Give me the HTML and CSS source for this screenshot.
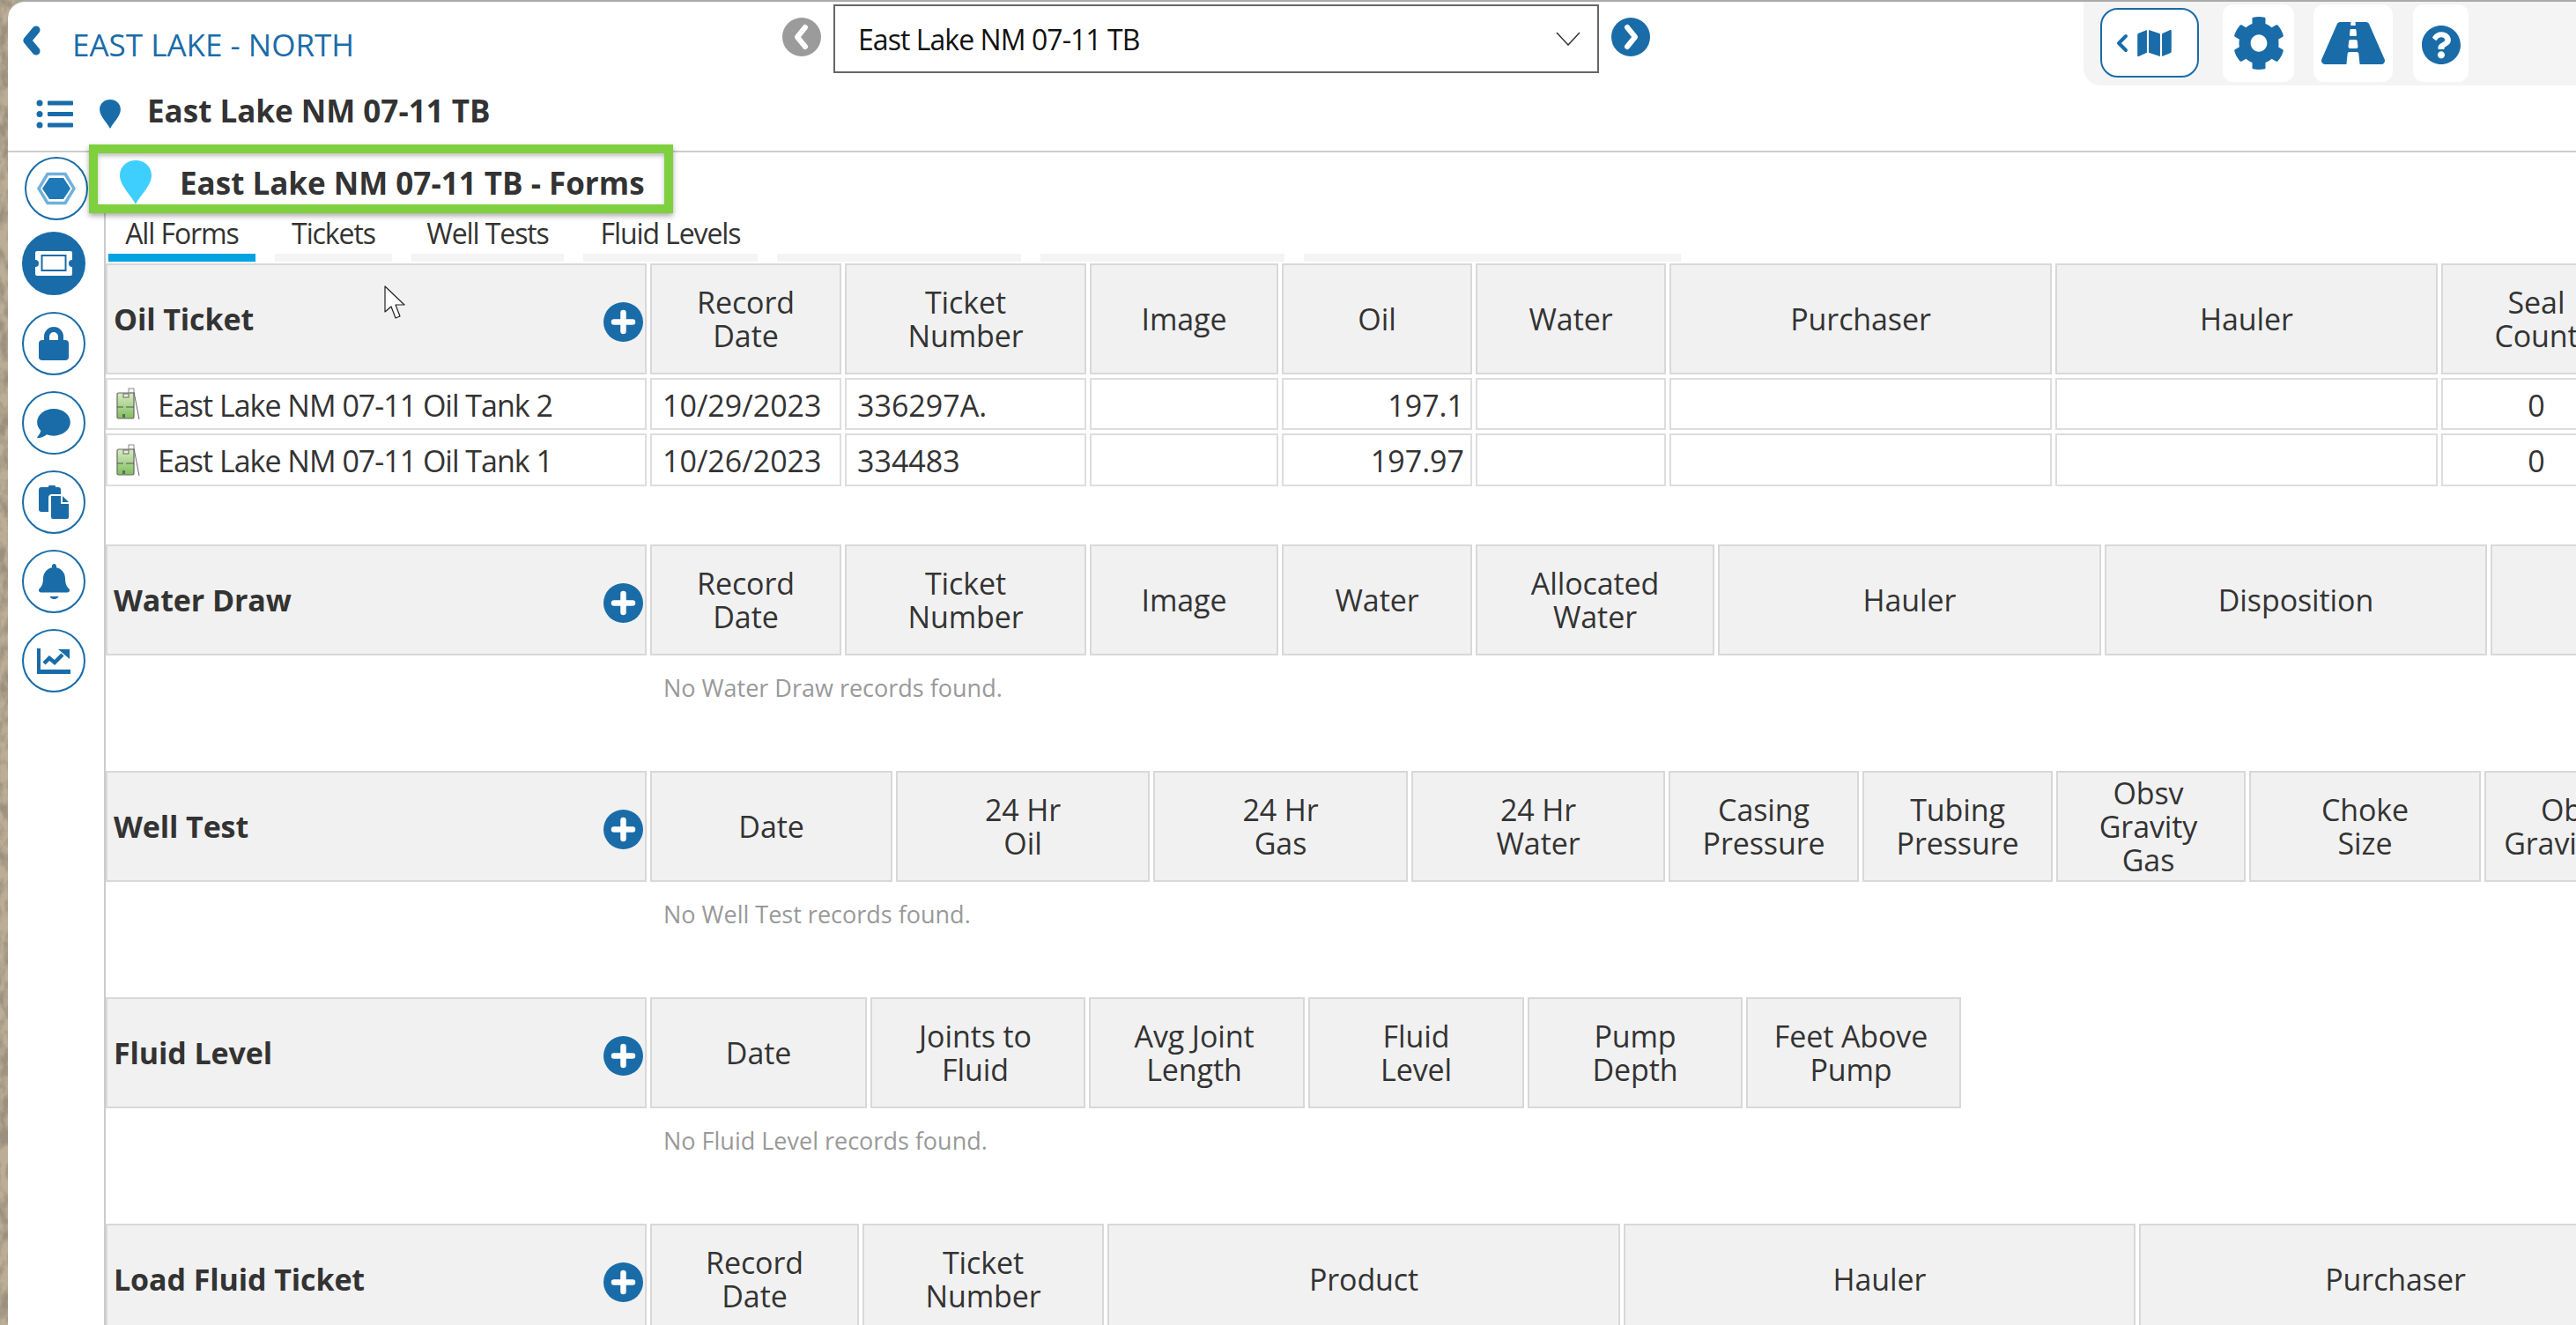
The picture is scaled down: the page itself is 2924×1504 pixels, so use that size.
FILE: index.html

```html
<!DOCTYPE html>
<html lang="en">

<head>
    <meta charset="UTF-8">
    <title>East Lake NM 07-11 TB - Forms</title>
    <link rel="stylesheet" href="styles.css">
</head>

<body>
    <svg class="aerial" aria-hidden="true">
        <filter id="ground" x="0" y="0" width="100%" height="100%">
            <feTurbulence type="fractalNoise" baseFrequency="0.09 0.05" numOctaves="4" seed="7" />
            <feColorMatrix type="matrix" values="0 0 0 0 0.33  0 0 0 0 0.28  0 0 0 0 0.21  3 0 0 0 -1.1" />
        </filter>
        <rect width="100%" height="100%" fill="#bcae96" />
        <rect width="100%" height="100%" filter="url(#ground)" />
    </svg>

    <svg class="defs" aria-hidden="true">
        <symbol id="pin" viewBox="0 0 36 50">
            <path d="M18 50 C14 41 0 29 0 17 C0 7 8 0 18 0 C28 0 36 7 36 17 C36 29 22 41 18 50Z" />
        </symbol>
        <symbol id="plus" viewBox="0 0 45 45">
            <circle cx="22.5" cy="22.5" r="22.5" fill="#196ca8" />
            <path d="M22.5 12v21M12 22.5h21" stroke="#fff" stroke-width="6.5" stroke-linecap="round" />
        </symbol>
        <symbol id="tank" viewBox="0 0 27 37">
            <defs>
                <linearGradient id="tankfill" x1="0" y1="0" x2="0" y2="1">
                    <stop offset="0" stop-color="#d9ebc6" />
                    <stop offset="1" stop-color="#7fbe5c" />
                </linearGradient>
            </defs>
            <rect x="1" y="6" width="19" height="29" rx="1.5" fill="url(#tankfill)" stroke="#666" stroke-width="1.2" />
            <rect x="8" y="7" width="6" height="4" fill="#e8f2dc" stroke="#666" stroke-width="1" />
            <path d="M1 22h7M11 22h9" stroke="#555" stroke-width="1" />
            <rect x="7" y="30" width="3" height="4" fill="#666" />
            <rect x="14" y="1" width="6" height="5" fill="none" stroke="#888" stroke-width="1" />
            <path d="M20 5l6 31" stroke="#666" stroke-width="1" fill="none" />
        </symbol>
    </svg>

    <div class="app">
        <header class="top">
            <div class="topbar">
                <a class="back">
                    <svg class="back-icon" viewBox="0 0 22 34"><path d="M16 5 L6 17 L16 29" /></svg>
                    <span>EAST LAKE - NORTH</span>
                </a>
                <div class="picker">
                    <span class="round-btn round-off"><svg viewBox="0 0 44 44"><path d="M26 11 L17 22 L26 33" /></svg></span>
                    <div class="select">
                        <span>East Lake NM 07-11 TB</span>
                        <svg class="caret" viewBox="0 0 28 16"><path d="M1 1 L14 15 L27 1" /></svg>
                    </div>
                    <span class="round-btn"><svg viewBox="0 0 44 44"><path d="M18 11 L27 22 L18 33" /></svg></span>
                </div>
                <div class="tools">
                    <span class="map-btn">
                        <svg class="map-back" viewBox="0 0 14 22"><path d="M11 3 L3 11 L11 19" /></svg>
                        <svg class="map-icon" viewBox="0 32 576 448"><path d="M0 117.66v346.32c0 11.32 11.43 19.06 21.94 14.86L160 416V32L20.12 87.95A32.006 32.006 0 0 0 0 117.66zM192 416l192 64V96L192 32v384zM554.06 33.16L416 96v384l139.88-55.95A31.996 31.996 0 0 0 576 394.34V48.02c0-11.32-11.43-19.06-21.94-14.86z" /></svg>
                    </span>
                    <span class="tile tile-gear">
                        <svg class="gear" viewBox="0 0 512 512" preserveAspectRatio="none"><path d="M487.4 315.7l-42.6-24.6c4.3-23.2 4.3-47 0-70.2l42.6-24.6c4.9-2.8 7.1-8.6 5.5-14-11.1-35.6-30-67.8-54.7-94.6-3.8-4.1-10-5.1-14.8-2.3L380.8 110c-17.9-15.4-38.5-27.3-60.8-35.1V25.8c0-5.6-3.9-10.5-9.4-11.7-36.7-8.2-74.3-7.8-109.2 0-5.5 1.2-9.4 6.1-9.4 11.7V75c-22.2 7.9-42.8 19.8-60.8 35.1L88.7 85.5c-4.9-2.8-11-1.9-14.8 2.3-24.7 26.7-43.6 58.9-54.7 94.6-1.7 5.4.6 11.2 5.5 14L67.3 221c-4.3 23.2-4.3 47 0 70.2l-42.6 24.6c-4.9 2.8-7.1 8.6-5.5 14 11.1 35.6 30 67.8 54.7 94.6 3.8 4.1 10 5.1 14.8 2.3l42.6-24.6c17.9 15.4 38.5 27.3 60.8 35.1v49.2c0 5.6 3.9 10.5 9.4 11.7 36.7 8.2 74.3 7.8 109.2 0 5.5-1.2 9.4-6.1 9.4-11.7v-49.2c22.2-7.9 42.8-19.8 60.8-35.1l42.6 24.6c4.9 2.8 11 1.9 14.8-2.3 24.7-26.7 43.6-58.9 54.7-94.6 1.5-5.5-.7-11.3-5.6-14.1zM256 336c-44.1 0-80-35.9-80-80s35.9-80 80-80 80 35.9 80 80-35.9 80-80 80z" /></svg>
                    </span>
                    <span class="tile tile-road">
                        <svg class="road" viewBox="0 64 576 384" preserveAspectRatio="none"><path d="M573.19 402.67l-139.79-320C428.43 71.29 417.6 64 405.68 64h-97.59l2.45 23.16c.5 4.72-3.21 8.84-7.96 8.84h-29.16c-4.75 0-8.46-4.12-7.96-8.84L267.91 64h-97.59c-11.93 0-22.76 7.29-27.73 18.67L2.8 402.67C-6.45 423.86 8.31 448 30.54 448h196.84l10.31-97.68c.86-8.14 7.72-14.32 15.91-14.32h68.8c8.19 0 15.05 6.18 15.91 14.32L348.62 448h196.84c22.23 0 36.99-24.14 27.73-45.33zM260.4 135.16a8 8 0 0 1 7.96-7.16h39.29c4.09 0 7.53 3.09 7.96 7.16l4.6 43.58c.75 7.09-4.81 13.26-11.93 13.26h-40.54c-7.13 0-12.68-6.17-11.93-13.26l4.59-43.58zM315.64 304h-55.29c-9.5 0-16.91-8.23-15.91-17.68l5.07-48c.86-8.14 7.72-14.32 15.91-14.32h45.15c8.19 0 15.05 6.18 15.91 14.32l5.07 48c1 9.45-6.41 17.68-15.91 17.68z" /></svg>
                    </span>
                    <span class="tile tile-help">
                        <svg class="help" viewBox="8 8 496 496" preserveAspectRatio="none"><path d="M504 256c0 136.997-111.043 248-248 248S8 392.997 8 256C8 119.083 119.043 8 256 8s248 111.083 248 248zM262.655 90c-54.497 0-89.255 22.957-116.549 63.758-3.536 5.286-2.353 12.415 2.715 16.258l34.699 26.31c5.205 3.947 12.621 3.008 16.665-2.122 17.864-22.658 30.113-35.797 57.303-35.797 20.429 0 45.698 13.148 45.698 32.958 0 14.976-12.363 22.667-32.534 33.976C247.128 238.528 216 254.941 216 296v4c0 6.627 5.373 12 12 12h56c6.627 0 12-5.373 12-12v-1.333c0-28.462 83.186-29.647 83.186-106.667 0-58.002-60.165-102-116.531-102zM256 338c-25.365 0-46 20.635-46 46 0 25.364 20.635 46 46 46s46-20.636 46-46c0-25.365-20.635-46-46-46z" /></svg>
                    </span>
                </div>
            </div>
            <div class="subbar">
                <svg class="list-icon" viewBox="0 0 42 33">
                    <circle cx="4" cy="4" r="3.5" /><circle cx="4" cy="16.5" r="3.5" /><circle cx="4" cy="29" r="3.5" />
                    <rect x="13" y="1.5" width="29" height="5" rx="1" /><rect x="13" y="14" width="29" height="5" rx="1" /><rect x="13" y="26.5" width="29" height="5" rx="1" />
                </svg>
                <svg class="sub-pin"><use href="#pin" /></svg>
                <h1>East Lake NM 07-11 TB</h1>
            </div>
        </header>

        <div class="content">
            <nav class="side">
                <span class="side-btn side-first">
                    <svg viewBox="0 0 44 44" width="44" height="38" preserveAspectRatio="none"><path d="M11 1h22l11 21-11 21H11L0 22z" fill="#6fb0dc" /><path d="M13 5h18l9 17-9 17H13L4 22z" fill="#fff" /><path d="M14 8h16l8 14-8 14H14L6 22z" fill="#1f78b8" /></svg>
                </span>
                <span class="side-btn side-on">
                    <svg viewBox="0 0 44 28" width="44" height="28"><path d="M3 0h38a2 2 0 0 1 2 2v8a4 4 0 0 0 0 8v8a2 2 0 0 1-2 2H3a2 2 0 0 1-2-2v-8a4 4 0 0 0 0-8V2a2 2 0 0 1 2-2z" fill="#fff" /><rect x="8.500" y="5" width="27" height="17" fill="#fff" stroke="#196ca8" stroke-width="2" /></svg>
                </span>
                <span class="side-btn">
                    <svg viewBox="0 0 34 38" width="34" height="38"><path d="M9 16V11a8 8 0 0 1 16 0v5" fill="none" stroke="#196ca8" stroke-width="6" /><rect y="15" width="34" height="23" rx="4" /></svg>
                </span>
                <span class="side-btn">
                    <svg viewBox="0 0 512 448" width="38" height="33"><path d="M256 0C114.600 0 0 93.100 0 208c0 49.600 21.400 95 57 130.700C44.500 389.100 2.700 434 2.200 434.500c-2.200 2.300-2.800 5.700-1.500 8.700S4.800 448 8 448c66.300 0 116-31.800 140.600-51.400 32.700 12.300 69 19.400 107.400 19.400 141.400 0 256-93.100 256-208S397.400 0 256 0z" /></svg>
                </span>
                <span class="side-btn">
                    <svg viewBox="0 0 34 38" width="34" height="38"><path d="M3 2h8a4 4 0 0 1 8 0h3a3 3 0 0 1 3 3v5H15a4 4 0 0 0-4 4v16H3a3 3 0 0 1-3-3V5a3 3 0 0 1 3-3z" /><path d="M14 12h11v9h9v15a2 2 0 0 1-2 2H16a2 2 0 0 1-2-2z" /><path d="M27 12l7 7h-7z" /></svg>
                </span>
                <span class="side-btn">
                    <svg viewBox="0 0 448 512" width="35" height="40"><path d="M224 512c35.320 0 63.970-28.650 63.970-40H160.030c0 11.350 28.650 40 63.970 40zm215.390-149.710c-19.320-20.760-55.470-51.990-55.470-154.290 0-77.700-54.480-139.900-127.940-155.160V32c0-17.670-14.320-32-31.980-32s-31.980 14.330-31.980 32v20.840C118.560 68.100 64.080 130.300 64.080 208c0 102.300-36.150 133.530-55.470 154.290-6 6.450-8.660 14.160-8.610 21.710.11 16.400 12.980 32 32.100 32h383.800c19.120 0 32-15.600 32.100-32 .05-7.550-2.610-15.270-8.610-21.710z" /></svg>
                </span>
                <span class="side-btn">
                    <svg viewBox="0 0 38 29" width="38" height="29"><path d="M0 0h4v24h34v5H0z" /><path d="M8 17l6-6 6 5 9-9" fill="none" stroke="#196ca8" stroke-width="4.500" /><path d="M24 1h13v11z" /></svg>
                </span>
            </nav>

            <main class="main">
                <div class="callout">
                    <svg class="callout-pin"><use href="#pin" /></svg>
                    <h2>East Lake NM 07-11 TB - Forms</h2>
                </div>

                <div class="tabs">
                    <span class="tab tab-on tab-all">All Forms</span>
                    <span class="tab tab-tickets">Tickets</span>
                    <span class="tab tab-well">Well Tests</span>
                    <span class="tab tab-fluid">Fluid Levels</span>
                    <span class="tab tab-a"></span>
                    <span class="tab tab-b"></span>
                    <span class="tab tab-c"></span>
                </div>

                <section class="form form-filled">
                    <div class="grid grid-oil">
                        <div class="head head-title"><b>Oil Ticket</b><svg class="add"><use href="#plus" /></svg></div>
                        <div class="head">Record<br>Date</div>
                        <div class="head">Ticket<br>Number</div>
                        <div class="head">Image</div>
                        <div class="head">Oil</div>
                        <div class="head">Water</div>
                        <div class="head">Purchaser</div>
                        <div class="head">Hauler</div>
                        <div class="head">Seal<br>Count</div>

                        <div class="cell cell-name"><svg class="tank"><use href="#tank" /></svg>East Lake NM 07-11 Oil Tank 2</div>
                        <div class="cell">10/29/2023</div>
                        <div class="cell">336297A.</div>
                        <div class="cell"></div>
                        <div class="cell cell-num">197.1</div>
                        <div class="cell"></div>
                        <div class="cell"></div>
                        <div class="cell"></div>
                        <div class="cell cell-mid">0</div>

                        <div class="cell cell-name"><svg class="tank"><use href="#tank" /></svg>East Lake NM 07-11 Oil Tank 1</div>
                        <div class="cell">10/26/2023</div>
                        <div class="cell">334483</div>
                        <div class="cell"></div>
                        <div class="cell cell-num">197.97</div>
                        <div class="cell"></div>
                        <div class="cell"></div>
                        <div class="cell"></div>
                        <div class="cell cell-mid">0</div>
                    </div>
                </section>

                <section class="form">
                    <div class="grid grid-water">
                        <div class="head head-title"><b>Water Draw</b><svg class="add"><use href="#plus" /></svg></div>
                        <div class="head">Record<br>Date</div>
                        <div class="head">Ticket<br>Number</div>
                        <div class="head">Image</div>
                        <div class="head">Water</div>
                        <div class="head">Allocated<br>Water</div>
                        <div class="head">Hauler</div>
                        <div class="head">Disposition</div>
                        <div class="head"></div>
                    </div>
                    <p class="empty">No Water Draw records found.</p>
                </section>

                <section class="form">
                    <div class="grid grid-well">
                        <div class="head head-title"><b>Well Test</b><svg class="add"><use href="#plus" /></svg></div>
                        <div class="head">Date</div>
                        <div class="head">24 Hr<br>Oil</div>
                        <div class="head">24 Hr<br>Gas</div>
                        <div class="head">24 Hr<br>Water</div>
                        <div class="head">Casing<br>Pressure</div>
                        <div class="head">Tubing<br>Pressure</div>
                        <div class="head head-left">Obsv<br>Gravity<br>Gas</div>
                        <div class="head">Choke<br>Size</div>
                        <div class="head">Obsv<br>Gravity Oil</div>
                    </div>
                    <p class="empty">No Well Test records found.</p>
                </section>

                <section class="form">
                    <div class="grid grid-fluid">
                        <div class="head head-title"><b>Fluid Level</b><svg class="add"><use href="#plus" /></svg></div>
                        <div class="head">Date</div>
                        <div class="head head-left">Joints to<br>Fluid</div>
                        <div class="head head-left">Avg Joint<br>Length</div>
                        <div class="head">Fluid<br>Level</div>
                        <div class="head">Pump<br>Depth</div>
                        <div class="head head-left">Feet Above<br>Pump</div>
                    </div>
                    <p class="empty">No Fluid Level records found.</p>
                </section>

                <section class="form">
                    <div class="grid grid-load">
                        <div class="head head-title"><b>Load Fluid Ticket</b><svg class="add"><use href="#plus" /></svg></div>
                        <div class="head">Record<br>Date</div>
                        <div class="head">Ticket<br>Number</div>
                        <div class="head">Product</div>
                        <div class="head">Hauler</div>
                        <div class="head">Purchaser</div>
                    </div>
                </section>

                <svg class="cursor" viewBox="0 0 24 38">
                    <path d="M1 1 L1 30 L8 24 L13 37 L18 35 L13 22 L23 22 Z" fill="#fff" stroke="#222" stroke-width="1.200" stroke-linejoin="round" />
                </svg>
            </main>
        </div>
    </div>
</body>

</html>
```

FILE: styles.css

```css
* {
    box-sizing: border-box;
}

html, body {
    height: 100%;
}

body {
    position: relative;
    margin: 0;
    overflow: hidden;
    font-family: "Open Sans", sans-serif;
    color: #333;
    background-color: #b3a38b;
}

.aerial {
    position: absolute;
    left: 0;
    top: 0;
    width: 30px;
    height: 1504px;
}

.defs {
    position: absolute;
    width: 0;
    height: 0;
}

.app {
    position: relative;
    margin-left: 9px;
    height: 1504px;
    background: #fff;
    border-top: 2px solid #aaa;
    border-top-left-radius: 20px;
    overflow: hidden;
}

/* top area */

.top {
    height: 171px;
    border-bottom: 2px solid #ccc;
}

.topbar {
    display: flex;
    height: 95px;
}

.back {
    display: flex;
    align-items: flex-start;
    width: 879px;
    color: #196ca8;
    font-size: 35px;
    padding: 25px 0 0 16px;
}

.back-icon {
    width: 22px;
    height: 34px;
    margin: 2px 35px 0 0;
    fill: none;
    stroke: #196ca8;
    stroke-width: 9;
    stroke-linejoin: round;
    stroke-linecap: round;
}

.picker {
    display: flex;
    align-items: flex-start;
    width: 1477px;
}

.round-btn {
    width: 44px;
    height: 44px;
    margin-top: 18px;
    border-radius: 50%;
    background: #196ca8;
}

.round-off {
    background: #9b9b9b;
}

.round-btn svg {
    display: block;
    fill: none;
    stroke: #fff;
    stroke-width: 6;
    stroke-linecap: round;
    stroke-linejoin: round;
}

.select {
    display: flex;
    align-items: center;
    justify-content: space-between;
    width: 869px;
    height: 78px;
    margin: 3px 14px 0 14px;
    padding: 0 19px 0 26px;
    border: 2px solid #666;
    color: #111;
    font-size: 32px;
    letter-spacing: -.95px;
}

.caret {
    width: 28px;
    height: 16px;
    fill: none;
    stroke: #333;
    stroke-width: 1.500;
}

.tools {
    display: flex;
    align-items: flex-start;
    flex: 1;
    height: 95px;
    padding: 3px 0 0 19px;
    background: #f4f4f4;
    border-bottom-left-radius: 20px;
}

.map-btn {
    display: flex;
    align-items: center;
    gap: 10px;
    width: 112px;
    height: 79px;
    margin: 4px 27px 0 0;
    padding-left: 16px;
    background: #fff;
    border: 2px solid #196ca8;
    border-radius: 20px;
}

.map-back {
    width: 14px;
    height: 22px;
    fill: none;
    stroke: #196ca8;
    stroke-width: 4;
    stroke-linecap: round;
    stroke-linejoin: round;
}

.map-icon {
    width: 39px;
    height: 30px;
    fill: #196ca8;
}

.tile {
    display: flex;
    align-items: center;
    justify-content: center;
    height: 88px;
    background: #fff;
    border-radius: 12px;
}

.tile svg {
    fill: #196ca8;
}

.tile-gear {
    width: 81px;
    margin-right: 22px;
}

.tile-road {
    width: 90px;
    margin-right: 23px;
}

.tile-help {
    width: 63px;
}

.gear {
    width: 60px;
    height: 62px;
}

.road {
    width: 72px;
    height: 48px;
    margin-top: -1px;
}

.help {
    width: 44px;
    height: 44px;
    margin-top: 4px;
}

.subbar {
    display: flex;
    align-items: center;
    height: 65px;
}

.list-icon {
    width: 42px;
    height: 33px;
    margin: 0 29px 0 32px;
    fill: #196ca8;
}

.sub-pin {
    width: 26px;
    height: 33px;
    margin-right: 29px;
    fill: #196ca8;
}

.subbar h1 {
    margin: 0 0 8px;
    font-size: 35px;
    font-weight: 700;
    color: #333;
}

/* sidebar and main */

.content {
    display: flex;
}

.side {
    display: flex;
    flex-direction: column;
    align-items: flex-start;
    gap: 18px;
    width: 109px;
    padding: 5px 0 0 16px;
}

.side-btn {
    display: flex;
    align-items: center;
    justify-content: center;
    width: 72px;
    height: 72px;
    border: 2px solid #196ca8;
    border-radius: 50%;
    fill: #196ca8;
}

.side-first {
    margin: 0 0 -5px 3px;
}

.side-on {
    margin-bottom: 1px;
    background: #196ca8;
}

.main {
    position: relative;
    flex: 1;
    min-width: 0;
    height: 1331px;
    padding-top: 72px;
    border-left: 2px solid #ccc;
}

/* green box laid over the page heading */
.callout {
    position: absolute;
    left: -19px;
    top: -9px;
    display: flex;
    align-items: center;
    width: 663px;
    height: 78px;
    padding-top: 8px;
    background: #fff;
    border: 10px solid #7ed03f;
    box-shadow: 0 3px 6px rgba(0, 0, 0, .35), inset 0 3px 5px rgba(0, 0, 0, .25);
    z-index: 2;
}

.callout-pin {
    align-self: flex-end;
    width: 36px;
    height: 50px;
    margin: 0 32px 0 25px;
    fill: #3ecfff;
}

.callout h2 {
    margin: 0;
    font-size: 35px;
    font-weight: 700;
    color: #333;
    white-space: nowrap;
}

.tabs {
    display: flex;
    margin-left: 3px;
    gap: 22px;
    height: 52px;
    margin-bottom: 2px;
}

.tab {
    height: 52px;
    border-bottom: 9px solid #f4f4f4;
    font-size: 32px;
    letter-spacing: -1.100px;
    line-height: 40px;
    text-align: center;
    color: #333;
}

.tab-on {
    border-bottom-color: #00a2e0;
}

.tab-all { width: 167px; }
.tab-tickets { width: 133px; }
.tab-well { width: 173px; }
.tab-fluid { width: 198px; }
.tab-a, .tab-b { width: 277px; }
.tab-c { width: 428px; }

.form {
    height: 257px;
}

.form-filled {
    height: 319px;
}

.grid {
    display: grid;
    gap: 4px;
    grid-template-rows: 126px;
    width: 3200px;
}

.grid-oil {
    grid-template-rows: 126px 59px 60px;
    grid-template-columns: 614px 217px 274px 214px 216px 216px 434px 434px 216px;
}

.grid-water { grid-template-columns: 614px 217px 274px 214px 216px 271px 435px 434px 216px; }
.grid-well { grid-template-columns: 614px 275px 288px 289px 288px 216px 216px 215px 263px 208px; }
.grid-fluid { grid-template-columns: 614px 246px 244px 245px 245px 244px 244px; }
.grid-load { grid-template-columns: 614px 237px 274px 582px 581px 582px; }

.head {
    display: flex;
    align-items: center;
    justify-content: center;
    background: #f1f1f1;
    border: 2px solid #d8d8d8;
    font-size: 34px;
    line-height: 38px;
    letter-spacing: -.1px;
    text-align: center;
    color: #333;
}

.head-left {
    padding-right: 6px;
}

.head-title {
    justify-content: space-between;
    padding: 0 2px 0 7px;
    text-align: left;
}

.head-title b {
    font-size: 34px;
    font-weight: 700;
}

.add {
    width: 45px;
    height: 45px;
    margin-top: 6px;
}

.cell {
    display: flex;
    align-items: center;
    padding: 2px 12px 0;
    background: #fff;
    border: 2px solid #ddd;
    font-size: 34px;
    color: #333;
    white-space: nowrap;
}

.cell-name {
    padding-left: 10px;
    letter-spacing: -1px;
}

.cell-num {
    justify-content: flex-end;
    padding-right: 7px;
}

.cell-mid {
    justify-content: center;
}

.tank {
    width: 27px;
    height: 37px;
    margin-right: 20px;
    margin-top: -2px;
}

.empty {
    margin: 0 0 0 633px;
    padding-top: 19px;
    font-size: 27px;
    line-height: 36px;
    color: #999;
}

.cursor {
    position: absolute;
    left: 316px;
    top: 151px;
    width: 24px;
    height: 38px;
}
```
